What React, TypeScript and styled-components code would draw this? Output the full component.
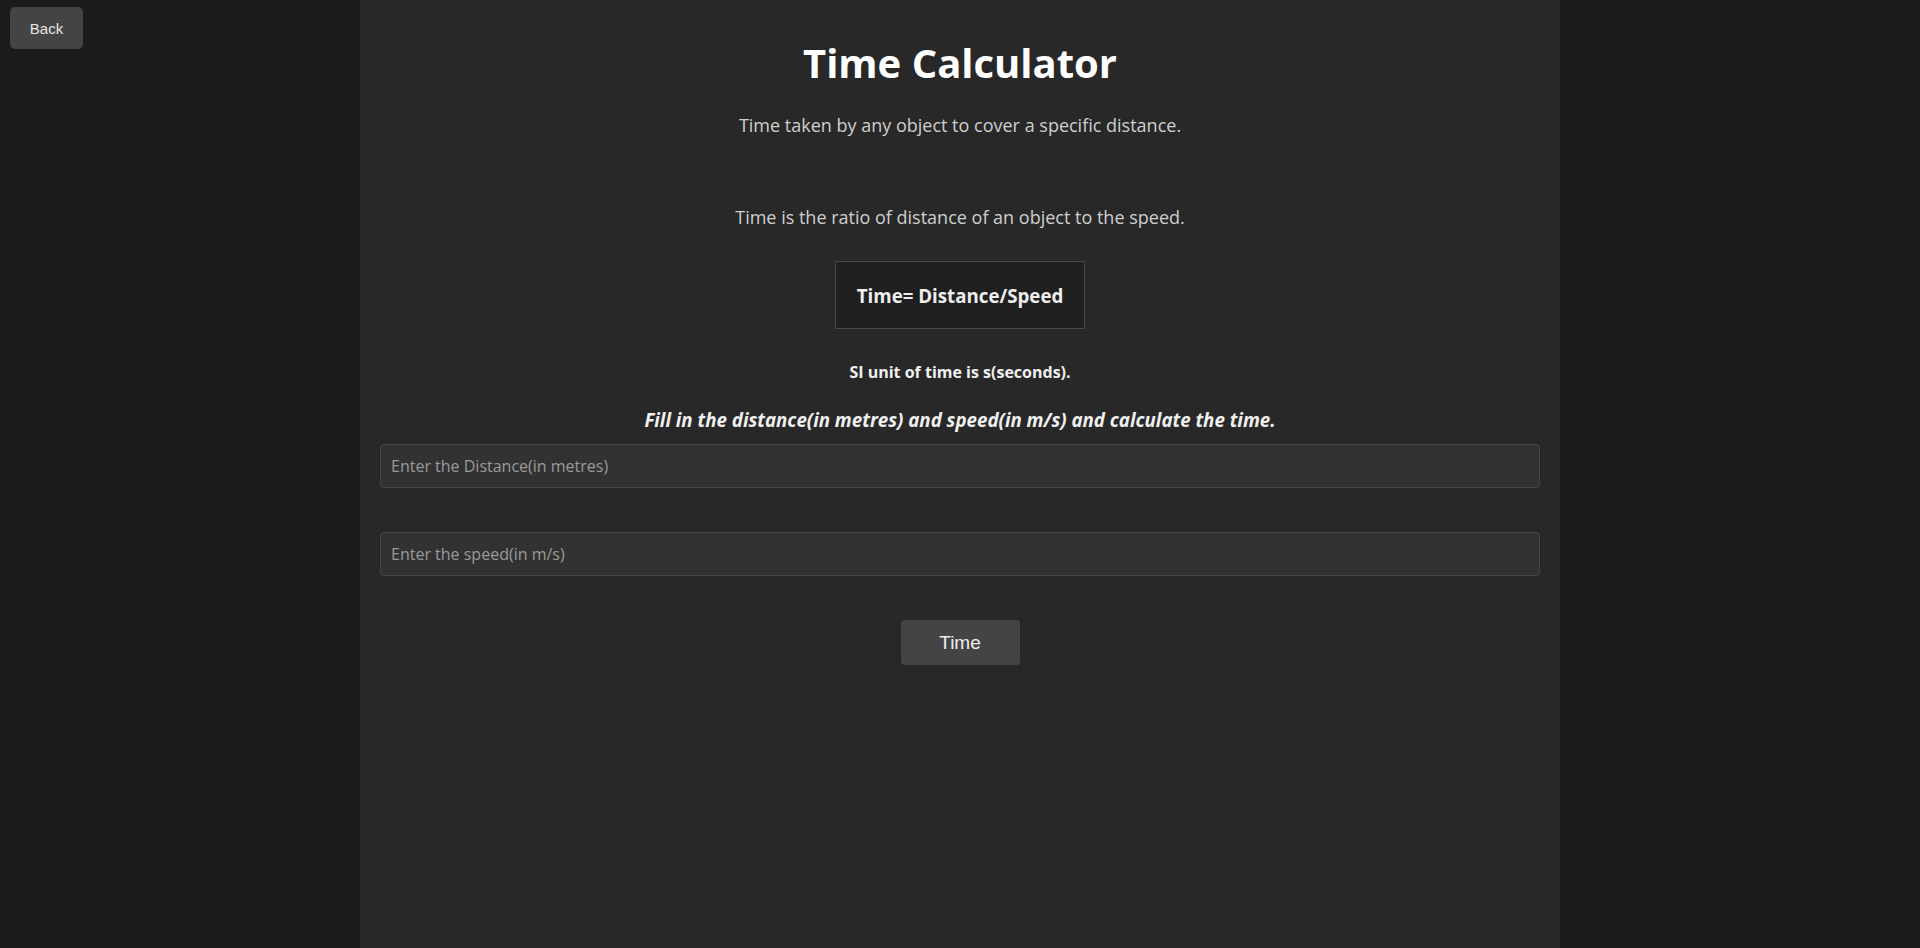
import React from "react";
import styled, { createGlobalStyle } from "styled-components";

const Global = createGlobalStyle`
  html, body { margin: 0; padding: 0; background: #1b1b1b; }
  body { font-family: "Open Sans", "Noto Sans", sans-serif; min-height: 948px; }
  #root { min-height: 948px; }
`;

const Page = styled.div`
  min-height: 948px;
  display: flex;
  justify-content: center;
  background: #1b1b1b;
`;

const BackButton = styled.button`
  position: absolute;
  top: 7px;
  left: 10px;
  width: 73px;
  height: 42px;
  background: #444;
  color: #e6e6e6;
  border: none;
  border-radius: 5px;
  font-family: "Liberation Sans", Arial, sans-serif;
  font-size: 15px;
  cursor: pointer;
`;

const Panel = styled.main`
  width: 1200px;
  min-height: 948px;
  box-sizing: border-box;
  background: #282828;
  padding: 0 20px;
  display: flex;
  flex-direction: column;
  align-items: center;
  color: #fff;
`;

const Title = styled.h1`
  margin: 38px 0 0;
  font-size: 40px;
  line-height: 50px;
  font-weight: 700;
  color: #fff;
`;

const Text = styled.p<{ $top: number }>`
  margin: ${(p) => p.$top}px 0 0;
  font-size: 18px;
  line-height: 24px;
  color: #cfcfcf;
`;

const FormulaBox = styled.div`
  margin-top: 32px;
  width: 250px;
  height: 68px;
  box-sizing: border-box;
  border: 1px solid #474747;
  background: #202020;
  display: flex;
  align-items: center;
  justify-content: center;
  font-size: 18.72px;
  font-weight: 700;
  color: #eee;
`;

const Note = styled.p`
  margin: 32px 0 0;
  font-size: 16px;
  line-height: 22px;
  font-weight: 700;
  color: #f0f0f0;
`;

const Instruction = styled.p`
  margin: 23px 0 0;
  font-size: 18.72px;
  line-height: 28px;
  font-weight: 700;
  font-style: italic;
  color: #f0f0f0;
`;

const Input = styled.input<{ $top: number }>`
  margin-top: ${(p) => p.$top}px;
  width: 100%;
  height: 44px;
  box-sizing: border-box;
  background: #323232;
  border: 1px solid #464646;
  border-radius: 4px;
  padding: 0 10px;
  font-family: "Open Sans", "Noto Sans", sans-serif;
  font-size: 16px;
  color: #ddd;
  outline: none;
  &::placeholder { color: #9a9a9a; }
`;

const CalcButton = styled.button`
  margin-top: 44px;
  width: 119px;
  height: 45px;
  background: #444;
  color: #eee;
  border: none;
  border-radius: 4px;
  font-family: "Liberation Sans", Arial, sans-serif;
  font-size: 19px;
  cursor: pointer;
`;

export default function App() {
  return (
    <>
      <Global />
      <Page>
        <BackButton>Back</BackButton>
        <Panel>
          <Title>Time Calculator</Title>
          <Text $top={25}>Time taken by any object to cover a specific distance.</Text>
          <Text $top={68}>Time is the ratio of distance of an object to the speed.</Text>
          <FormulaBox>Time= Distance/Speed</FormulaBox>
          <Note>SI unit of time is s(seconds).</Note>
          <Instruction>Fill in the distance(in metres) and speed(in m/s) and calculate the time.</Instruction>
          <Input $top={10} placeholder="Enter the Distance(in metres)" />
          <Input $top={44} placeholder="Enter the speed(in m/s)" />
          <CalcButton>Time</CalcButton>
        </Panel>
      </Page>
    </>
  );
}
